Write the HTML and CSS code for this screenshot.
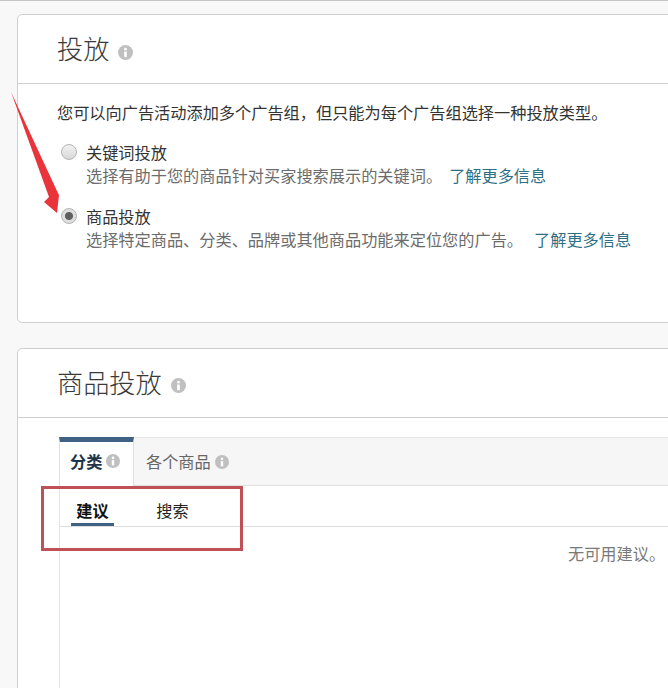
FILE: index.html
```html
<!DOCTYPE html>
<html lang="zh-CN">
<head>
<meta charset="utf-8">
<title>投放</title>
<link rel="stylesheet" href="styles.css">
</head>
<body>
<svg width="0" height="0" class="defs">
  <symbol id="info" viewBox="0 0 16 16">
    <circle cx="8" cy="8" r="8" fill="currentColor"/>
    <circle cx="8" cy="4.4" r="1.5" fill="#fff"/>
    <rect x="6.6" y="7" width="2.8" height="6" fill="#fff"/>
  </symbol>
</svg>
<main class="page">
  <section class="card card-targeting">
    <header class="card-head">
      <h2 class="card-title">投放</h2>
      <svg class="info info-lg"><use href="#info"/></svg>
    </header>
    <div class="card-body">
      <p class="intro">您可以向广告活动添加多个广告组，但只能为每个广告组选择一种投放类型。</p>
      <div class="option">
        <span class="radio"></span>
        <div>
          <div class="option-label">关键词投放</div>
          <div class="option-desc">选择有助于您的商品针对买家搜索展示的关键词。<a class="more">了解更多信息</a></div>
        </div>
      </div>
      <div class="option">
        <span class="radio radio-on"></span>
        <div>
          <div class="option-label">商品投放</div>
          <div class="option-desc">选择特定商品、分类、品牌或其他商品功能来定位您的广告。<a class="more more-wide">了解更多信息</a></div>
        </div>
      </div>
    </div>
  </section>

  <section class="card card-products">
    <header class="card-head">
      <h2 class="card-title">商品投放</h2>
      <svg class="info info-lg"><use href="#info"/></svg>
    </header>
    <div class="panel">
      <div class="tabs">
        <div class="tab tab-active"><span class="tab-label">分类</span><svg class="info"><use href="#info"/></svg></div>
        <div class="tab"><span class="tab-label">各个商品</span><svg class="info"><use href="#info"/></svg></div>
      </div>
      <div class="panel-body">
        <div class="subtabs">
          <div class="subtab subtab-active">建议</div>
          <div class="subtab">搜索</div>
        </div>
        <p class="empty">无可用建议。</p>
      </div>
    </div>
  </section>
</main>
<div class="highlight"></div>
<svg class="arrow" width="70" height="130" viewBox="0 0 70 130">
  <polygon points="11,2 57,101 59,105 57,123 44,112 49,107" fill="#e8343a"/>
</svg>
</body>
</html>
```
FILE: styles.css
```css
* { box-sizing: border-box; }
html, body { margin: 0; height: 100%; }
body {
  position: relative;
  width: 668px;
  height: 688px;
  overflow: hidden;
  background: #f8f8f8;
  font-family: "Noto Sans CJK SC", "Liberation Sans", sans-serif;
  font-size: 16.2px;
  color: #333;
}
.defs { position: absolute; }
.page {
  height: 688px;
  overflow: hidden;
  border-top: 1px solid #c4c4c4;
  padding: 13px 0 0 17px;
}
.card {
  width: 670px;
  background: #fff;
  border: 1px solid #cfcfcf;
  border-radius: 5px;
}
.card-targeting { height: 309px; margin-bottom: 25px; }
.card-products { height: 400px; }
.card-head {
  display: flex;
  align-items: center;
  gap: 8px;
  height: 69px;
  padding-left: 39px;
  border-bottom: 1px solid #cfcfcf;
}
.card-title {
  margin: -2px 0 0;
  font-size: 26.2px;
  font-weight: 300;
  line-height: 36px;
  color: #3a3a3a;
}
.info { width: 14px; height: 14px; color: #c0c0c0; margin-left: 4px; flex: none; }
.info-lg { width: 15px; height: 15px; margin: 4px 0 0 1px; }
.card-targeting .info-lg { margin-top: 6px; }
.card-body { padding: 16px 0 0 40px; }
.intro { margin: 0 0 17px -1px; line-height: 24px; color: #333; white-space: nowrap; }
.option { display: flex; gap: 9px; margin: 0 0 18px 3px; }
.radio {
  flex: none;
  width: 16px;
  height: 16px;
  margin-top: 3px;
  border-radius: 50%;
  border: 1px solid #b4b4b4;
  background: linear-gradient(#f2f2f2, #d8d8d8);
}
.radio-on {
  background: radial-gradient(circle, #5f5f5f 0 3.5px, #dedede 4.5px);
}
.option-label { line-height: 23px; color: #333; }
.option-desc { line-height: 23px; color: #6c6c6c; white-space: nowrap; }
.more { margin-left: 7px; color: #2f6f86; }
.more-wide { margin-left: 11px; }
.panel { margin: 19px 0 0 41px; }
.tabs {
  display: flex;
  height: 49px;
  background: #f6f6f7;
  border-top: 1px solid #e4e4e4;
  border-bottom: 1px solid #e0e0e0;
}
.tab {
  display: flex;
  align-items: center;
  padding: 0 12px;
  color: #666;
  line-height: 47px;
}
.tab-active {
  width: 75px;
  margin: -1px 0 -1px;
  height: 49px;
  background: #fff;
  border-top: 5px solid #3f6184;
  border-left: 1px solid #e0e0e0;
  border-right: 1px solid #e0e0e0;
  padding: 0 10px 6px;
  font-weight: 700;
  color: #1f3447;
}
.panel-body {
  height: 220px;
  border-left: 1px solid #e4e4e4;
}
.subtabs {
  display: flex;
  gap: 10px;
  height: 41px;
  padding-left: 11px;
  border-bottom: 1px solid #ddd;
}
.subtab {
  width: 43px;
  height: 40px;
  margin-right: 27px;
  text-align: center;
  line-height: 49px;
  color: #222;
  white-space: nowrap;
}
.subtab-active {
  border-bottom: 3px solid #3f6184;
  font-weight: 700;
  color: #111;
}
.empty {
  margin: 14px 0 0;
  padding-left: 508px;
  line-height: 24px;
  color: #7a7a7a;
  white-space: nowrap;
}
.highlight {
  position: absolute;
  left: 41px;
  top: 486px;
  width: 202px;
  height: 65px;
  border: 3px solid #bf5058;
}
.arrow {
  position: absolute;
  left: 0;
  top: 90px;
}
```
